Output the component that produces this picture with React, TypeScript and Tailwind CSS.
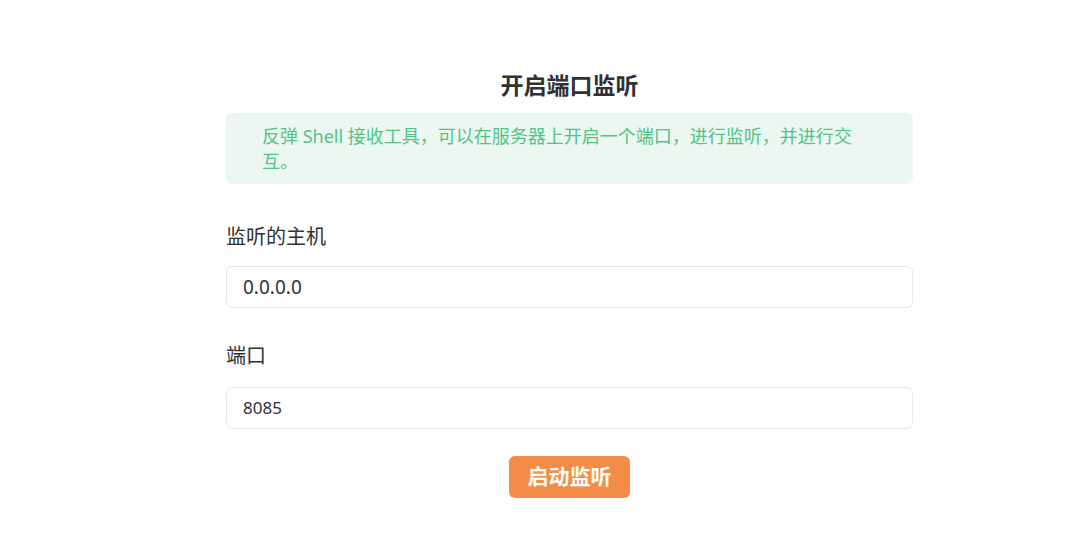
import React from 'react';

export default function App() {
  return (
    <div
      className="min-h-screen w-full bg-white text-[#303133]"
      style={{ fontFamily: '"Noto Sans", "Noto Sans CJK SC", sans-serif' }}
    >
      <div className="ml-[226px] w-[687px] pt-[68px]">
        {/* Title */}
        <h2 className="text-center text-[23px] font-bold leading-[34px] text-[#303133]">开启端口监听</h2>

        {/* Info alert */}
        <div className="mt-[11px] h-[71px] rounded-md bg-[#ecf7f1] pl-[36px] pr-[60px] pt-[11px]">
          <p className="text-[18px] leading-[25px] text-[#4fc586]">
            反弹 Shell 接收工具，可以在服务器上开启一个端口，进行监听，并进行交互。
          </p>
        </div>

        {/* Host */}
        <div className="mt-[40px]">
          <label className="block text-[20px] leading-[26px] text-[#303133]">监听的主机</label>
          <div className="mt-[16px] flex h-[42px] items-center rounded-md border border-[#e6e8ee] px-[16px]">
            <span className="text-[19px] text-[#303133]">0.0.0.0</span>
          </div>
        </div>

        {/* Port */}
        <div className="mt-[35px]">
          <label className="block text-[20px] leading-[26px] text-[#303133]">端口</label>
          <div className="mt-[18px] flex h-[42px] items-center rounded-md border border-[#e6e8ee] px-[16px]">
            <span className="text-[17px] text-[#303133]">8085</span>
          </div>
        </div>

        {/* Action */}
        <div className="mt-[27px] flex justify-center">
          <button className="h-[42px] w-[121px] rounded-md bg-[#f28c46] text-[21px] font-bold text-white">
            启动监听
          </button>
        </div>
      </div>
    </div>
  );
}
